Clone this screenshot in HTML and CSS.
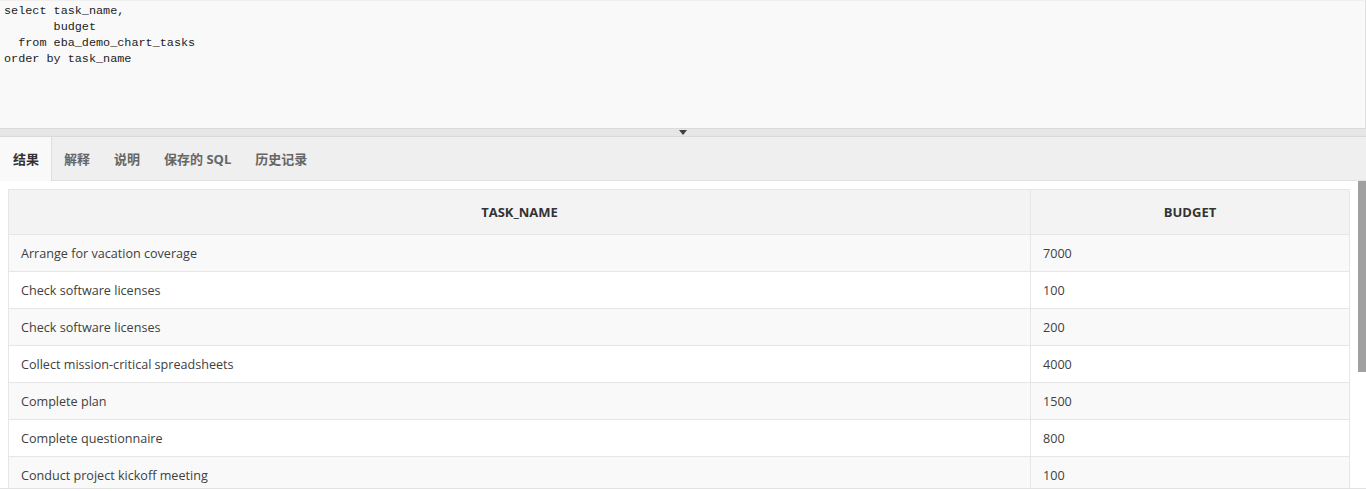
FILE: index.html
```html
<!DOCTYPE html>
<html>
<head>
<meta charset="utf-8">
<link rel="stylesheet" href="styles.css">
</head>
<body>
<div class="page">
  <div class="editor"><pre class="code">select task_name,
       budget
  from eba_demo_chart_tasks
order by task_name</pre></div>
  <div class="splitter"><span class="arrow"></span></div>
  <div class="tabs">
    <div class="tab active">结果</div>
    <div class="tab">解释</div>
    <div class="tab">说明</div>
    <div class="tab">保存的 SQL</div>
    <div class="tab">历史记录</div>
  </div>
  <div class="results">
    <div class="scroll">
      <table class="grid">
        <thead>
          <tr><th class="c1">TASK_NAME</th><th class="c2">BUDGET</th></tr>
        </thead>
        <tbody>
          <tr><td>Arrange for vacation coverage</td><td>7000</td></tr>
          <tr><td>Check software licenses</td><td>100</td></tr>
          <tr><td>Check software licenses</td><td>200</td></tr>
          <tr><td>Collect mission-critical spreadsheets</td><td>4000</td></tr>
          <tr><td>Complete plan</td><td>1500</td></tr>
          <tr><td>Complete questionnaire</td><td>800</td></tr>
          <tr><td>Conduct project kickoff meeting</td><td>100</td></tr>
        </tbody>
      </table>
    </div>
    <div class="scrollbar"><div class="thumb"></div></div>
  </div>
</div>
</body>
</html>
```

FILE: styles.css
```css
html, body {
  margin: 0;
  padding: 0;
  background: #fff;
  overflow: hidden;
}
.page {
  width: 1366px;
  height: 489px;
  display: flex;
  flex-direction: column;
  font-family: "Open Sans", "Noto Sans CJK SC", sans-serif;
}
.editor {
  height: 128px;
  flex: none;
  box-sizing: border-box;
  background: #f9f9f9;
  border-right: 1px solid #e2e2e2;
  border-top: 1px solid #f0f0f0;
}
.code {
  margin: 0;
  padding: 2px 4px;
  font-family: "Liberation Mono", "DejaVu Sans Mono", monospace;
  font-size: 11.8px;
  line-height: 16px;
  color: #222;
}
.splitter {
  height: 9px;
  flex: none;
  box-sizing: border-box;
  background: #e6e6e6;
  border-top: 1px solid #dadada;
  border-bottom: 1px solid #dadada;
  display: flex;
  justify-content: center;
  align-items: center;
}
.arrow {
  width: 0;
  height: 0;
  border-left: 4px solid transparent;
  border-right: 4px solid transparent;
  border-top: 5px solid #404040;
}
.tabs {
  height: 44px;
  flex: none;
  box-sizing: border-box;
  background: #efefef;
  border-bottom: 1px solid #e2e2e2;
  display: flex;
}
.tab {
  padding: 0 12px;
  line-height: 44px;
  font-size: 13px;
  font-weight: 700;
  color: #666;
}
.tab.active {
  padding: 0 12px 0 13px;
  background: #f9f9f9;
  color: #333;
  border-right: 1px solid #dedede;
  height: 44px;
  margin-bottom: -1px;
}
.results {
  flex: 1;
  min-height: 0;
  display: flex;
  border-bottom: 1px solid #e2e2e2;
  overflow: hidden;
}
.scroll {
  flex: 1;
  padding: 8px 8px 0 8px;
  overflow: hidden;
}
.scrollbar {
  width: 8px;
  background: #fff;
}
.thumb {
  height: 191px;
  background: #a0a0a0;
}
.grid {
  width: 1342px;
  border-collapse: collapse;
  font-size: 12.6px;
  color: #404040;
}
.grid th, .grid td {
  border: 1px solid #e6e6e6;
  height: 37px;
  box-sizing: border-box;
  padding: 0 12px;
}
.grid th {
  height: 45px;
  font-size: 13px;
  background: #f3f3f3;
  font-weight: 700;
  color: #333;
  text-align: center;
}
.grid .c1 { width: 1022px; }
.grid td { text-align: left; }
.grid tbody tr:nth-child(odd) td { background: #f9f9f9; }
.grid tbody tr:nth-child(even) td { background: #fff; }
```
